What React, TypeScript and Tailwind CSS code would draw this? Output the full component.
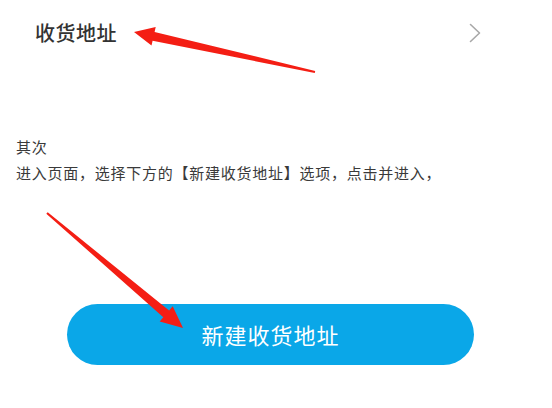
export default function App() {
  return (
    <div
      className="relative w-[552px] h-[408px] bg-white overflow-hidden"
      style={{ fontFamily: '"Noto Sans CJK SC", "Noto Sans", sans-serif' }}
    >
      {/* Address row */}
      <div className="flex items-center justify-between h-[66px] pl-[35px] pr-[71px]">
        <span className="text-[20px] font-medium text-[#333] tracking-[0.5px]">收货地址</span>
        <svg width="12" height="20" viewBox="0 0 12 20" fill="none" aria-hidden>
          <path d="M1.5 1.5L10.5 10L1.5 18.5" stroke="#a8a8a8" strokeWidth="1.6" strokeLinecap="round" strokeLinejoin="round" />
        </svg>
      </div>

      {/* Instructions */}
      <div className="mt-[68px] pl-[16px] text-[15px] leading-[26px] text-[#3a3a3a] tracking-[0.75px]">
        <p>其次</p>
        <p>进入页面，选择下方的【新建收货地址】选项，点击并进入，</p>
      </div>

      {/* Button */}
      <div className="mt-[118px] pl-[67px]">
        <button className="w-[407px] h-[61px] rounded-full bg-[#0aa7e8] text-white text-[22px] tracking-[1px] flex items-center justify-center">
          新建收货地址
        </button>
      </div>

      {/* Annotation arrows */}
      <svg className="absolute inset-0 pointer-events-none" width="552" height="408" viewBox="0 0 552 408" aria-hidden>
        <polygon
          fill="#f41e14"
          points="134,32 155.7,27 154.6,31.9 315.2,71 314.8,73 152.6,40.7 151.5,45.6"
        />
        <polygon
          fill="#f41e14"
          points="183,328 172.7,306.2 169.1,310.4 47.7,212.3 46.3,213.7 163.3,317.2 159.7,321.4"
        />
      </svg>
    </div>
  )
}
